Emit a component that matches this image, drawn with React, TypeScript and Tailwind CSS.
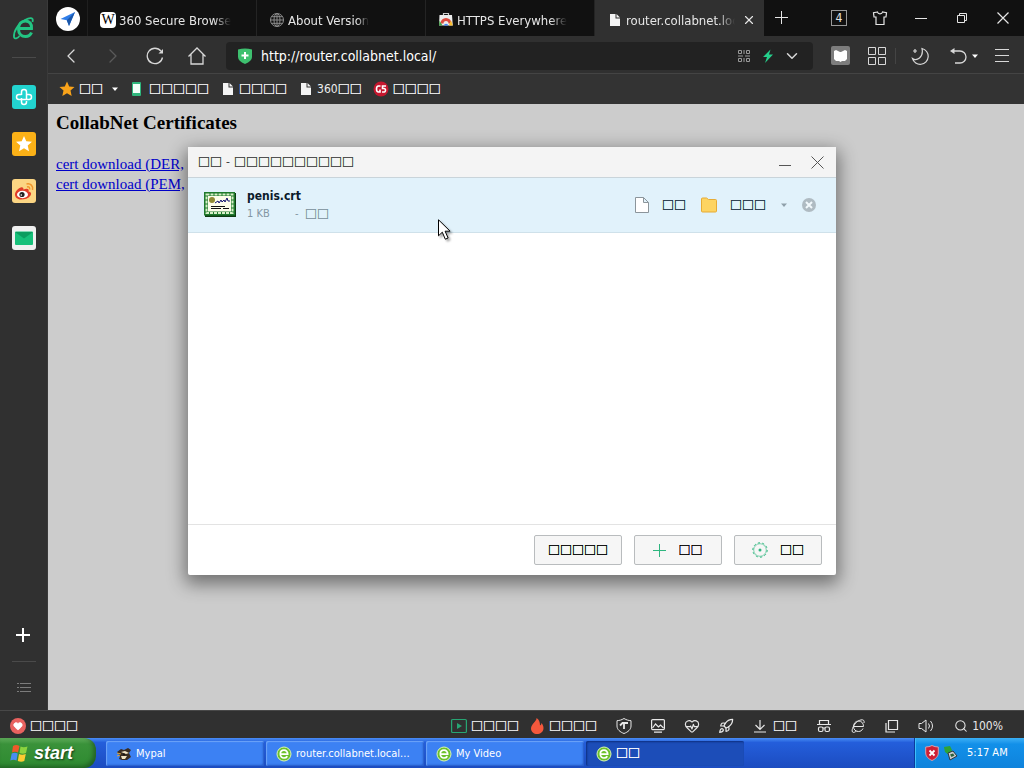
import React from 'react';
import { ChevronDown, ChevronLeft, ChevronRight, Heart, HeartPulse, Rocket, Search, X } from 'lucide-react';
import clsx from 'clsx';

const uiFont = "font-['DejaVu_Sans_Condensed','Noto_Sans_CJK_SC',sans-serif]";

const Boxes: React.FC<{ count: number; className?: string }> = ({ count, className }) => (
  <span className={clsx("font-['Noto_Sans_CJK_SC',sans-serif] text-xs leading-4 [text-shadow:0_0_0_currentColor,0_0_0_currentColor]", className)}>{'□'.repeat(count)}</span>
);

const PageIcon: React.FC = () => (
  <svg viewBox="0 0 16 16" className="h-4 w-4 shrink-0">
    <path d="M3 2h5.500v4.500H13V14H3z" fill="#f4f4f4" />
    <path d="M9.500 2L13 5.500H9.500z" fill="#f4f4f4" />
  </svg>
);

const CaretIcon: React.FC<{ className?: string }> = ({ className }) => (
  <svg viewBox="0 0 8 8" className={clsx('h-2 w-2 shrink-0', className)}>
    <path d="M1 2.500h6L4 6z" fill="currentColor" />
  </svg>
);

const BrowserIcon: React.FC = () => (
  <svg viewBox="0 0 16 16" className="h-4 w-4 shrink-0">
    <circle cx="8" cy="8" r="7" fill="#6cc12b" stroke="#d9f5b5" />
    <path d="M4.300 8.200h7.400c0-2.400-1.500-4-3.700-4s-3.700 1.600-3.700 3.800S5.800 12 8 12c1.500 0 2.600-.6 3.300-1.800" fill="none" stroke="#fff" strokeWidth="1.700" />
  </svg>
);

const GlobeIcon: React.FC = () => (
  <svg viewBox="0 0 16 16" className="h-4 w-4 shrink-0" fill="none" stroke="#8c8c8c">
    <circle cx="8" cy="8" r="6.500" />
    <ellipse cx="8" cy="8" rx="3" ry="6.500" />
    <path d="M8 1.500v13M1.500 8h13M2.500 4.700h11M2.500 11.300h11" />
  </svg>
);

const WikiIcon: React.FC = () => (
  <span className="flex h-4 w-4 shrink-0 items-center justify-center rounded-sm bg-white font-['Liberation_Serif',serif] text-[14px] leading-4 text-black">W</span>
);

const StoreIcon: React.FC = () => (
  <svg viewBox="0 0 16 16" className="h-4 w-4 shrink-0">
    <path d="M5.500 3.500V1.500h5v2" fill="none" stroke="#ccc" strokeWidth="1.200" />
    <path d="M1.500 3h12.500l.8 10.500H1z" fill="#ececec" />
    <path d="M2.500 11.500a5.500 5.500 0 0111 0l-3 0a2.500 2.500 0 00-5 0z" fill="#dd4b3e" />
    <path d="M1.500 8.500l3 5H1z" fill="#43a047" />
    <path d="M13 8.500l1.800 5h-4z" fill="#fbc02d" />
    <path d="M5.800 13.500a2.300 2.300 0 014.500 0z" fill="#4285f4" />
  </svg>
);

const tabs = [
  { title: '360 Secure Browser', icon: WikiIcon, active: false },
  { title: 'About Version', icon: GlobeIcon, active: false },
  { title: 'HTTPS Everywhere', icon: StoreIcon, active: false },
  { title: 'router.collabnet.local', icon: PageIcon, active: true },
];

const iconButton = 'flex h-full shrink-0 items-center justify-center';

const TabBar: React.FC = () => (
  <div className="flex h-9 bg-[#111] text-[#e6e6e6]">
    <button aria-label="Navigation page" className={clsx(iconButton, 'w-10 border-r border-[#1f1f1f] pt-0.5')}>
      <svg viewBox="0 0 24 24" className="h-6 w-6">
        <circle cx="12" cy="12" r="12" fill="#fff" />
        <path d="M19 5L4.500 12l6.300 1.200L13 19z" fill="#2f7de8" />
        <path d="M19 5l-8.200 8.200L13 19z" fill="#1b57a8" />
      </svg>
    </button>
    {tabs.map(({ title, icon: Icon, active }) => (
      <div
        key={title}
        className={clsx(
          'flex min-w-0 max-w-[169px] flex-1 items-center border-r pt-1 pl-3',
          active ? 'border-[#303030] bg-[#303030]' : 'border-[#242424]'
        )}
      >
        <button className="flex min-w-0 flex-1 items-center gap-[3px] text-left">
          <Icon />
          <span className="min-w-0 max-w-[112px] overflow-hidden pt-0.5 text-[13px] leading-5 whitespace-nowrap [mask-image:linear-gradient(to_right,black_85%,transparent)]">
            {title}
          </span>
        </button>
        {active && (
          <button aria-label="Close tab" className="flex w-7 justify-center">
            <X className="h-3.5 w-3.5" strokeWidth={2} />
          </button>
        )}
      </div>
    ))}
    <button aria-label="New tab" className={clsx(iconButton, 'w-9')}>
      <svg viewBox="0 0 14 14" className="h-3.5 w-3.5" stroke="currentColor" strokeWidth="1"><path d="M6.500 0v13M0 6.500h13" /></svg>
    </button>
    <div className="ml-auto flex gap-px pr-px">
      <button aria-label="Open tabs" className={clsx(iconButton, 'w-10')}>
        <span className="flex h-4 w-4 items-center justify-center border border-[#9a9a9a] text-xs">4</span>
      </button>
      <button aria-label="Skins" className={clsx(iconButton, 'w-10')}>
        <svg viewBox="0 0 16 16" className="h-4 w-4" fill="none" stroke="currentColor" strokeWidth="1.200">
          <path d="M5.500 2L1.500 2.700l.5 4.300h2v7.500h8V7h2l.5-4.300L10.500 2C10 4.500 6 4.500 5.500 2z" />
        </svg>
      </button>
      <button aria-label="Minimize" className={clsx(iconButton, 'w-10')}>
        <svg viewBox="0 0 14 14" className="h-3.5 w-3.5" stroke="currentColor"><path d="M1 7.500h12" /></svg>
      </button>
      <button aria-label="Restore" className={clsx(iconButton, 'w-10')}>
        <svg viewBox="0 0 12 12" className="h-3 w-3" fill="none" stroke="currentColor"><path d="M1.500 3.500h7v7h-7zM3.500 3V1.500h7v7H9" /></svg>
      </button>
      <button aria-label="Close" className={clsx(iconButton, 'w-10')}>
        <svg viewBox="0 0 12 12" className="h-3 w-3" stroke="currentColor" strokeWidth="1.200"><path d="M.5.500l11 11M11.500.500l-11 11" /></svg>
      </button>
    </div>
  </div>
);

const NavBar: React.FC = () => (
  <div className="flex h-[38px] items-center border-b border-[#444] bg-[#303030] pt-0.5 pl-0.5 text-[#d8d8d8]">
    <button aria-label="Back" className={clsx(iconButton, 'w-[42px]')}><ChevronLeft className="h-6 w-6" strokeWidth={1.3} /></button>
    <button aria-label="Forward" className={clsx(iconButton, 'w-[42px] text-[#5a5a5a]')}><ChevronRight className="h-6 w-6" strokeWidth={1.3} /></button>
    <button aria-label="Reload" className={clsx(iconButton, 'w-[42px]')}>
      <svg viewBox="0 0 18 18" className="h-[18px] w-[18px]" fill="none" stroke="currentColor" strokeWidth="1.300">
        <path d="M16.500 10.500A7.700 7.700 0 1115 4.200" />
        <path d="M17 2v4.500h-4.500z" fill="currentColor" stroke="none" />
      </svg>
    </button>
    <button aria-label="Home" className={clsx(iconButton, 'w-[42px]')}>
      <svg viewBox="0 0 18 18" className="h-[18px] w-[18px]" fill="none" stroke="currentColor" strokeWidth="1.300">
        <path d="M.5 9.500L9 1l8.500 8.500M3 7.500V17h12V7.500" />
      </svg>
    </button>
    <div className="ml-2 flex h-7 flex-1 items-center rounded bg-[#222] pr-[9px] pl-3">
      <svg viewBox="0 0 14 16" className="h-4 w-3.5 shrink-0">
        <path d="M0 1.500q7-2 14 0V9q0 4-7 7-7-3-7-7z" fill="#3ec06f" />
        <path d="M7 4v7M3.500 7.500h7" stroke="#fff" strokeWidth="2" />
      </svg>
      <input
        aria-label="Address"
        defaultValue="http://router.collabnet.local/"
        className="ml-[9px] min-w-0 flex-1 bg-transparent text-sm leading-5 text-white outline-none"
      />
      <button aria-label="QR code" className="flex w-6 justify-center">
        <svg viewBox="0 0 12 12" className="h-3 w-3" fill="none" stroke="#999">
          <path d="M.5.500h3v3h-3zM.5 8.500h3v3h-3zM8.500.500h3v3h-3zM8.500 8.500h3v3h-3zM6 0v4M0 6h5M7 6h5M6 8v4" />
        </svg>
      </button>
      <button aria-label="Speed mode" className="flex w-6 justify-center">
        <svg viewBox="0 0 12 14" className="h-3.5 w-3"><path d="M8.500.500L1 8h4l-2 6 8-8.500H7z" fill="#25d08c" /></svg>
      </button>
      <button aria-label="Address history" className="flex w-6 justify-center"><ChevronDown className="h-[18px] w-[18px]" strokeWidth={2} /></button>
    </div>
    <div className="ml-2.5 flex h-full items-center pr-1">
      <button aria-label="Reader" className={clsx(iconButton, 'w-9')}>
        <svg viewBox="0 0 20 20" className="h-5 w-5">
          <rect width="19" height="19" rx="2" fill="#7d7d7d" />
          <path d="M3 5l2-1 4 2h1l4-2 2 1v8l-2 2h-3l-1.500 1L8 15H5l-2-2z" fill="#fff" />
        </svg>
      </button>
      <button aria-label="Apps" className={clsx(iconButton, 'w-9')}>
        <svg viewBox="0 0 18 18" className="h-[18px] w-[18px]" fill="none" stroke="currentColor">
          <path d="M.5.500h7v7h-7zM10.500.500h7v7h-7zM.5 10.500h7v7h-7zM10.500 10.500h7v7h-7z" />
        </svg>
      </button>
      <span className="mr-[6px] h-4 w-px bg-[#444]" />
      <button aria-label="Night mode" className={clsx(iconButton, 'w-9')}>
        <svg viewBox="0 0 18 18" className="h-[18px] w-[18px]" fill="none" stroke="currentColor" strokeWidth="1.200">
          <path d="M11 1.500a8 8 0 11-9.500 10c4 3 11.500-1 9.500-10z" />
          <path d="M4 2v4M2 4h4" />
        </svg>
      </button>
      <button aria-label="Reopen closed tab" className={clsx(iconButton, 'mr-0.5 ml-2 w-9 gap-1')}>
        <svg viewBox="0 0 18 18" className="h-[18px] w-[18px]" fill="none" stroke="currentColor" strokeWidth="1.300">
          <path d="M4 4h7a6 6 0 010 12H6" />
          <path d="M1 4l4.500-3v6z" fill="currentColor" stroke="none" />
        </svg>
        <CaretIcon className="text-white" />
      </button>
      <button aria-label="Menu" className={clsx(iconButton, 'w-9')}>
        <svg viewBox="0 0 14 14" className="h-3.5 w-3.5" stroke="currentColor"><path d="M0 .5h14M0 6.500h14M0 12.500h14" /></svg>
      </button>
    </div>
  </div>
);

const BookmarkBar: React.FC = () => (
  <nav className="flex h-[30px] items-center gap-[11px] bg-[#333] pl-[11px] text-xs text-[#eee]">
    <button className="flex items-center gap-1">
      <svg viewBox="0 0 16 16" className="h-4 w-4"><path d="M8 .5l2.200 5 5.300.5-4 3.600L12.700 15 8 12.200 3.300 15l1.200-5.400L.5 6l5.300-.5z" fill="#f9a31a" /></svg>
      <Boxes count={2} />
      <CaretIcon className="ml-1 text-white" />
    </button>
    <a href="#mobile" className="flex items-center gap-[3px]">
      <svg viewBox="0 0 16 16" className="h-4 w-4"><rect x="2" y="1" width="9" height="14" rx="1" fill="#2fb67c" /><rect x="3" y="3" width="7" height="9" fill="#f2fff8" /></svg>
      <Boxes count={5} />
    </a>
    <a href="#news" className="flex items-center gap-[3px]"><PageIcon /><Boxes count={4} /></a>
    <a href="#search" className="flex items-center gap-[3px]">
      <PageIcon />
      <span className="flex items-center leading-4">360<Boxes count={2} /></span>
    </a>
    <a href="#games" className="flex items-center gap-1">
      <svg viewBox="0 0 16 16" className="h-4 w-4" fill="none" stroke="#fff" strokeWidth="1.600">
        <circle cx="8" cy="8" r="7.500" fill="#c5172f" stroke="none" />
        <path d="M7.500 5H5.500Q3.500 5 3.500 8t2 3h1.500V8.500M13 5H9.500v2.500h1.500q1.500 0 1.500 1.800T10.500 11H9" />
      </svg>
      <Boxes count={4} />
    </a>
  </nav>
);

const Sidebar: React.FC = () => (
  <aside className="flex w-12 shrink-0 flex-col items-center border-r border-[#3a3a3a] bg-[#303030] pt-4 pb-2.5">
    <svg viewBox="0 0 24 24" className="h-6 w-6" fill="none" stroke="#23c483">
      <path d="M6 12.500h13.500C20 8 17.500 5 13.500 5S6.500 8 6.500 13s3 7.500 7 7.500c3 0 5-1.500 6-4" strokeWidth="3" />
      <path d="M20.500 6c1.500-5-3-4.500-7.500-2C6.500 7.500 1.500 15 2 21c.5 2.500 3.500 1.500 5.500-1" strokeWidth="1.800" />
    </svg>
    <span className="mt-[17px] h-px w-6 bg-[#4a4a4a]" />
    <div className="mt-[27px] flex flex-col gap-[23px]">
      <button aria-label="Health">
        <svg viewBox="0 0 24 24" className="block h-6 w-6">
          <rect width="24" height="24" rx="3" fill="#22d3cf" />
          <path d="M9.500 10V7a2.500 2.500 0 015 0v7M14.500 9.500H17a2.500 2.500 0 010 5H9.500M9.500 9.500H7a2.500 2.500 0 000 5h2.500M9.500 13v4a2.500 2.500 0 005 0v-1" fill="none" stroke="#fff" strokeWidth="1.500" />
        </svg>
      </button>
      <button aria-label="Favorites">
        <svg viewBox="0 0 24 24" className="block h-6 w-6">
          <rect width="24" height="24" rx="3" fill="#fbb117" />
          <path d="M12 4l2.300 5.200 5.700.6-4.300 3.800 1.300 5.600-5-3-5 3 1.300-5.600L4 9.800l5.700-.6z" fill="#fff" />
        </svg>
      </button>
      <button aria-label="Weibo">
        <svg viewBox="0 0 24 24" className="block h-6 w-6">
          <rect width="24" height="24" rx="3" fill="#fbd583" />
          <path d="M3 15.500C3 12 8 7.500 10.500 8.500c1.500.5.5 2 1 2 4-1.500 6-.5 5 2 3 .5 3 2.500 2 4-2 3-6 4-9.500 4-4 0-6-2.500-6-5z" fill="#e03c28" />
          <ellipse cx="10.500" cy="15.500" rx="5.500" ry="3.700" fill="#fff" />
          <circle cx="10" cy="15.500" r="2.600" fill="#222" />
          <circle cx="9.300" cy="16" r=".8" fill="#fff" />
          <path d="M14.500 5c4-1 7 2 6 6M15 8c2-.5 3 .5 2.600 2.500" fill="none" stroke="#f0952b" strokeWidth="1.500" />
        </svg>
      </button>
      <button aria-label="Mail">
        <svg viewBox="0 0 24 24" className="block h-6 w-6">
          <rect width="24" height="24" rx="3" fill="#f0f0f0" />
          <rect x="3" y="5.500" width="18" height="13.500" rx="1" fill="#17c07a" />
          <path d="M3 6l9 6.500L21 6z" fill="#0c9d60" />
        </svg>
      </button>
    </div>
    <button aria-label="Add" className="mt-auto flex h-6 w-6 items-center justify-center pr-0.5">
      <svg viewBox="0 0 14 14" className="h-3.5 w-3.5" stroke="#fff" strokeWidth="2"><path d="M7 0v14M0 7h14" /></svg>
    </button>
    <span className="mt-3.5 h-px w-6 bg-[#4a4a4a]" />
    <button aria-label="Manage list" className="mt-3.5 flex h-6 w-6 items-center justify-center">
      <svg viewBox="0 0 14 12" className="h-3 w-3.5" stroke="#7c7c7c"><path d="M0 1.500h2M3 1.500h11M0 5.500h2M3 5.500h11M0 9.500h2M3 9.500h11" /></svg>
    </button>
  </aside>
);

const DownloadRow: React.FC = () => (
  <li className="flex h-[55px] items-center border-b border-[#cfe1ea] bg-[#e1f2fb] px-4">
    <svg viewBox="0 0 32 26" className="h-[26px] w-8 shrink-0">
      <path d="M1 1h31v24H1z" fill="#0d3d12" />
      <rect width="31" height="23.500" fill="#1f7a2c" />
      <rect x="2.500" y="2.500" width="26" height="18.500" fill="none" stroke="#d8f0c8" strokeWidth="2" strokeDasharray="3 1" />
      <rect x="4" y="4" width="23" height="15.500" fill="#fdfdea" />
      <circle cx="8" cy="8" r="3" fill="#8f8a35" />
      <path d="M11 11l3-2 1 2 2-3 1 2 2-2 1 2 2-4 1 3h2" fill="none" stroke="#12126e" />
      <path d="M7 14.500h14M7 16.500h10M19 16.500h6" stroke="#111" />
    </svg>
    <div className="ml-[11px]">
      <div className="text-xs leading-[17px] font-bold text-[#0b1a2a]">penis.crt</div>
      <div className="flex items-center text-[11px] leading-[17px] text-[#8396a3]">
        <span className="w-12">1 KB</span>
        <span className="w-2.5">-</span>
        <Boxes count={2} />
      </div>
    </div>
    <div className="ml-auto flex items-center text-[#1d3446]">
      <button className="flex items-center gap-3">
        <svg viewBox="0 0 16 16" className="h-4 w-4" fill="#fff" stroke="#8b959b">
          <path d="M1.500.500h8l5 5v10h-13zM9.500.500v5h5" />
        </svg>
        <Boxes count={2} />
      </button>
      <button className="ml-3.5 flex items-center gap-3">
        <svg viewBox="0 0 18 16" className="h-4 w-[18px]">
          <path d="M1.500 2q0-1 1-1h4l2 1.500h7q1 0 1 1v10.500q0 1-1 1h-13q-1 0-1-1z" fill="#fdd462" stroke="#e6ab35" />
        </svg>
        <Boxes count={3} />
      </button>
      <button aria-label="More" className="ml-3.5 text-[#8fa0aa]"><CaretIcon /></button>
      <button aria-label="Remove" className="mr-1 ml-3.5">
        <svg viewBox="0 0 14 14" className="block h-3.5 w-3.5">
          <circle cx="7" cy="7" r="7" fill="#afbbc2" />
          <path d="M4 4l6 6M10 4l-6 6" stroke="#f2f9fc" strokeWidth="2" />
        </svg>
      </button>
    </div>
  </li>
);

const dialogButton = 'flex h-[30px] w-[88px] items-center justify-center rounded-xs border border-[#b9bcbe] bg-[#f6f6f6] text-black';

const DownloadDialog: React.FC = () => (
  <div
    role="dialog"
    aria-label="Downloads"
    className="absolute top-[147px] left-1/2 flex min-h-[428px] w-[648px] -translate-x-1/2 flex-col rounded-xs bg-white shadow-[0_6px_18px_3px_rgba(0,0,0,0.45)]"
  >
    <header className="flex h-[31px] items-center border-b border-[#c9d4da] bg-[#f4f4f4] pr-3 pl-2.5 text-xs text-[#444]">
      <h2 className="flex items-center leading-4"><Boxes count={2} /><span className="px-1">-</span><Boxes count={10} /></h2>
      <button aria-label="Minimize" className="ml-auto">
        <svg viewBox="0 0 12 12" className="h-3 w-3" stroke="#555"><path d="M0 9.500h12" /></svg>
      </button>
      <button aria-label="Close" className="ml-5">
        <svg viewBox="0 0 13 13" className="h-[13px] w-[13px]" stroke="#555"><path d="M.5.500l12 12M12.500.500l-12 12" /></svg>
      </button>
    </header>
    <ul className="flex-1"><DownloadRow /></ul>
    <footer className="flex justify-end gap-3 border-t border-[#e3e3e3] px-3.5 py-2.5">
      <button className={dialogButton}><Boxes count={5} /></button>
      <button className={clsx(dialogButton, 'gap-3')}>
        <svg viewBox="0 0 13 13" className="h-[13px] w-[13px]" stroke="#2eb67f"><path d="M6.500 0v13M0 6.500h13" /></svg>
        <Boxes count={2} />
      </button>
      <button className={clsx(dialogButton, 'gap-3')}>
        <svg viewBox="0 0 16 16" className="h-4 w-4" fill="none" stroke="#2eb67f">
          <circle cx="8" cy="8" r="6.300" strokeOpacity=".6" />
          <circle cx="8" cy="8" r="7.200" strokeDasharray="2.200 2.300" />
          <circle cx="8" cy="8" r="1.500" fill="#2eb67f" stroke="none" />
        </svg>
        <Boxes count={2} />
      </button>
    </footer>
  </div>
);

const PageContent: React.FC = () => (
  <main className="flex-1 bg-[#ccc] px-2 pt-2 font-['Liberation_Serif',serif] text-[15px] leading-5 text-black">
    <h3 className="mb-5 text-[19px] leading-[22px] font-bold">CollabNet Certificates</h3>
    <p>
      <a href="#der" className="text-[#0000c8] underline">cert download (DER,</a>
      <br />
      <a href="#pem" className="text-[#0000c8] underline">cert download (PEM,</a>
    </p>
  </main>
);

const statusButton = 'flex w-[34px] shrink-0 justify-center';

const StatusBar: React.FC = () => (
  <div className="flex h-7 items-center border-t border-[#484848] bg-[#303030] pt-0.5 pr-[21px] pl-2.5 text-xs text-[#e8e8e8]">
    <button className="flex items-center gap-1">
      <span className="flex h-4 w-4 items-center justify-center rounded-full bg-[#e9625f]">
        <Heart className="h-2.5 w-2.5 text-white" fill="#fff" />
      </span>
      <Boxes count={4} />
    </button>
    <div className="ml-auto flex items-center">
      <button className="flex items-center gap-1">
        <svg viewBox="0 0 16 16" className="h-4 w-4" fill="none" stroke="#27a573" strokeWidth="1.200"><rect x=".6" y="1.500" width="14.800" height="13" rx="1" /><path d="M6 5l5 3-5 3z" fill="#27a573" stroke="none" /></svg>
        <Boxes count={4} />
      </button>
      <button className="ml-2.5 flex items-center gap-1">
        <svg viewBox="0 0 16 16" className="h-4 w-4"><path d="M7.500 0c.5 3-5.500 6-5.500 10.500C2 14 5 16 8 16s6.500-2 6.500-6c0-2-1-4-2-5-.2 1.500-.7 2-1.500 2.500C11 4 10 1.500 7.500 0z" fill="#f4583c" /></svg>
        <Boxes count={4} />
      </button>
      <button aria-label="Protection" className={clsx(statusButton, 'ml-2.5')}>
        <svg viewBox="0 0 16 16" className="h-4 w-4" fill="none" stroke="currentColor"><path d="M8 .5C5.500 2 3.500 2.500 1 2.700V8c0 3.500 3 6 7 7.500 4-1.500 7-4 7-7.500V2.700C12.500 2.500 10.500 2 8 .5z" /><path d="M4 7.500l2.500-2.500H12M8 5v6" strokeWidth="1.800" /></svg>
      </button>
      <button aria-label="Picture" className={statusButton}>
        <svg viewBox="0 0 14 14" className="h-3.5 w-3.5" fill="none" stroke="currentColor" strokeWidth="1.200"><rect x=".6" y=".6" width="12.800" height="10" rx="1" /><path d="M1.500 9l3-4 3 3 2-2 3 3M3 13.200h8" /></svg>
      </button>
      <button aria-label="Health check" className={statusButton}><HeartPulse className="h-4 w-4" strokeWidth={1.7} /></button>
      <button aria-label="Boost" className={statusButton}><Rocket className="h-4 w-4" strokeWidth={1.8} /></button>
      <button className="ml-2.5 flex items-center gap-1.5">
        <svg viewBox="0 0 14 14" className="h-3.5 w-3.5" fill="none" stroke="currentColor" strokeWidth="1.200"><path d="M7 1v9.500M2.500 6L7 10.500 11.500 6M1 13h12" /></svg>
        <Boxes count={2} />
      </button>
      <button aria-label="Private window" className={clsx(statusButton, 'ml-2.5')}>
        <svg viewBox="0 0 14 14" className="h-3.5 w-3.5" fill="none" stroke="currentColor" strokeWidth="1.200"><path d="M2.500 5V1.500h9V5M0 5.500h14" /><rect x="1.500" y="8" width="4.500" height="4.500" rx="1.500" /><rect x="8" y="8" width="4.500" height="4.500" rx="1.500" /><path d="M6 9h2" /></svg>
      </button>
      <button aria-label="Compatibility mode" className={statusButton}>
        <svg viewBox="0 0 14 14" className="h-3.5 w-3.5" fill="none" stroke="currentColor"><path d="M3 7.500h9.500C12.500 4 10.500 2 7.500 2S2.500 4.500 2.500 7.500s2 5 5 5c2 0 3.500-1 4.500-3M13 4c1-4-3-4-6.500-1.500S0 11 1.500 13c1 1 2.500 0 4-1" /></svg>
      </button>
      <button aria-label="Windows" className={statusButton}>
        <svg viewBox="0 0 14 14" className="h-3.5 w-3.5" fill="none" stroke="currentColor" strokeWidth="1.200"><path d="M3.500 1.500h9v9h-9zM1 4v9h9" /></svg>
      </button>
      <button aria-label="Sound" className={statusButton}>
        <svg viewBox="0 0 16 14" className="h-3.5 w-4" fill="none" stroke="currentColor"><path d="M1 4.500h2.500L8 1v12L3.500 9.500H1zM10.500 4.500q2 2.500 0 5M12.500 2q4 5 0 10" /></svg>
      </button>
      <button className="ml-[11px] flex items-center gap-1"><Search className="h-3.5 w-3.5" strokeWidth={1.8} />100%</button>
    </div>
  </div>
);

const MypalIcon: React.FC = () => (
  <svg viewBox="0 0 16 16" className="h-4 w-4 shrink-0">
    <path d="M1 6l4-3 3 1 4-2 3 2-2 3 2 4-4 3H6l-3-1 1-3z" fill="#3a2c22" />
    <path d="M5 6l4-1 4 2-3 1zM5 10l6 0-2 3H6z" fill="#f1e3c4" />
    <path d="M1 7l4 1M1 10l3-1" stroke="#d9a441" />
    <circle cx="8" cy="8.500" r="1" fill="#111" />
  </svg>
);

const tasks = [
  { id: 'mypal', label: 'Mypal', icon: MypalIcon },
  { id: 'router', label: 'router.collabnet.local...', icon: BrowserIcon },
  { id: 'video', label: 'My Video', icon: BrowserIcon },
  { id: 'downloads', label: <Boxes count={2} />, icon: BrowserIcon, pressed: true },
];

const Taskbar: React.FC = () => (
  <div className="flex h-[30px] bg-linear-to-b from-[#4a8df5] via-[#245edb] via-15% to-[#1c4cc0] text-[11px] text-white">
    <button className="flex w-24 shrink-0 items-center gap-1 rounded-r-xl bg-linear-to-b from-[#5eac5a] via-[#3a923a] via-20% to-[#2d8a30] pl-2.5 font-['Liberation_Sans',sans-serif] text-lg leading-6 font-bold italic shadow-[inset_-3px_-2px_4px_rgba(0,0,0,0.3)] [text-shadow:1px_1px_2px_rgba(0,0,0,0.6)]">
      <svg viewBox="0 0 20 20" className="h-5 w-5 shrink-0">
        <path d="M3 3q3-2 6.500 0L8 9.500Q5 8 2 9.500z" fill="#f0592a" />
        <path d="M10.500 3.500q3 1.500 7 0L16 10q-3 1.500-6.500 0z" fill="#8bd33f" />
        <path d="M1.700 10.500q3-1.500 6 0l-1.200 7q-3-1.500-6.200 0z" fill="#4a8df0" />
        <path d="M9 11q3 1.500 6.800 0L14.300 18q-3 1.500-6.500 0z" fill="#fccb32" />
      </svg>
      start
    </button>
    <div className="ml-2.5 flex min-w-0 flex-1 gap-0.5 pt-[3px] pb-0.5">
      {tasks.map(({ id, label, icon: Icon, pressed }) => (
        <button
          key={id}
          className={clsx(
            'flex w-[158px] min-w-0 items-center gap-1 rounded-xs pt-px pl-2.5 whitespace-nowrap',
            pressed
              ? 'bg-[#1c4db8] shadow-[inset_1px_1px_2px_#0d2f80]'
              : 'bg-[#3c81f3] shadow-[inset_1px_1px_1px_#6ea5f8,inset_-1px_-1px_2px_#2558c4]'
          )}
        >
          <Icon />
          <span>{label}</span>
        </button>
      ))}
    </div>
    <div className="flex w-[110px] shrink-0 items-center border-l border-[#0b3a9c] bg-linear-to-b from-[#3ab0f5] via-[#1290e9] via-20% to-[#0f83dc] pl-2.5 shadow-[inset_1px_0_0_#3fc0fa]">
      <svg viewBox="0 0 14 16" className="mr-1 h-4 w-3.5">
        <path d="M7 .5C5 1.500 3 2 .7 2v6c0 3.500 3 6 6.300 7.500C10.300 14 13.300 11.500 13.300 8V2C11 2 9 1.500 7 .5z" fill="#cf2035" stroke="#d9a0ac" />
        <path d="M4.500 5.500l5 5M9.500 5.500l-5 5" stroke="#fff" strokeWidth="1.800" />
      </svg>
      <svg viewBox="0 0 16 16" className="h-4 w-4">
        <path d="M1 2l6-1 2 4-3 5-4-3z" fill="#2fa334" />
        <path d="M5 8l5-2 4 5-7 4z" fill="#c8cdd2" stroke="#30363c" />
        <path d="M7 9.500l3-1 1.500 2-3 1.500z" fill="#2b5f38" />
      </svg>
      <time className="ml-2">5:17 AM</time>
    </div>
  </div>
);

const App: React.FC = () => (
  <div className={clsx('relative flex min-h-screen flex-col overflow-hidden', uiFont)}>
    <div className="flex flex-1">
      <Sidebar />
      <div className="flex min-w-0 flex-1 flex-col">
        <TabBar />
        <NavBar />
        <BookmarkBar />
        <PageContent />
      </div>
    </div>
    <StatusBar />
    <Taskbar />
    <DownloadDialog />
    {/* Mouse pointer */}
    <svg viewBox="0 0 14 22" className="pointer-events-none absolute top-[219px] left-[438px] h-[22px] w-3.5 drop-shadow-[2px_2px_1px_rgba(0,0,0,0.35)]">
      <path d="M.5.800v16l3.800-3.600 3 7 2.800-1.200-3-6.800h5z" fill="#fff" stroke="#000" />
    </svg>
  </div>
);

export default App;
